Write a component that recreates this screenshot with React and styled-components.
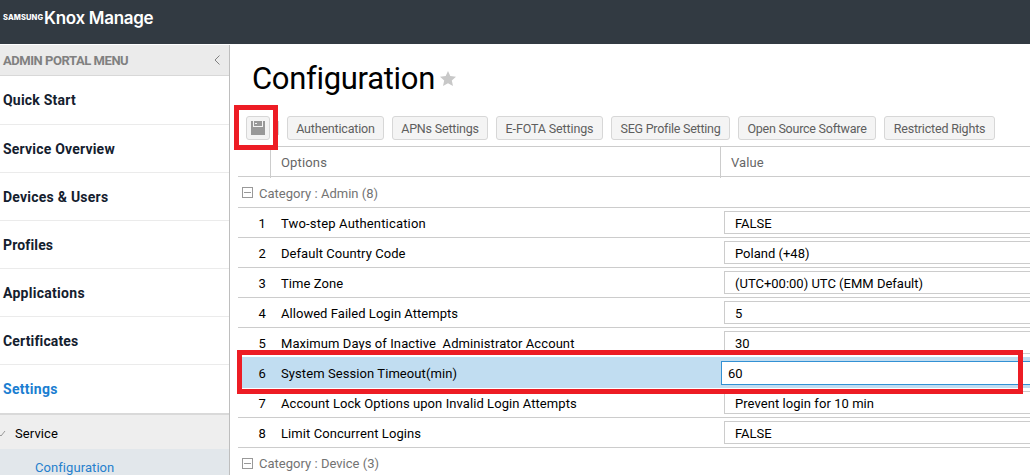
import React from "react";
import styled, { createGlobalStyle } from "styled-components";

const GlobalStyle = createGlobalStyle`
  * { box-sizing: border-box; }
  body { margin: 0; background: #fff; overflow: hidden; }
`;

const Page = styled.div`
  position: relative;
  width: 1030px;
  height: 475px;
  overflow: hidden;
  display: flex;
  flex-direction: column;
  font-family: Roboto, "Liberation Sans", sans-serif;
  font-size: 13px;
  color: #000;
  background: #fff;
`;

const TopBar = styled.header`
  flex: none;
  display: flex;
  align-items: flex-start;
  height: 45px;
  padding: 8px 0 0 3px;
  background: #323a42;
  border-bottom: 1px solid #fff;
  color: #fff;
  white-space: nowrap;
`;

const BrandSmall = styled.span`
  width: 41px;
  font: 800 7.5px/20px Inter, sans-serif;
  letter-spacing: 0.1px;
`;

const BrandName = styled.span`
  font: 600 17px/20px Inter, sans-serif;
  letter-spacing: -0.3px;
`;

const Body = styled.div`
  flex: 1;
  display: flex;
  min-height: 0;
`;

const Sidebar = styled.nav`
  flex: none;
  width: 230px;
  border-right: 1px solid #bebebe;
`;

const MenuHeader = styled.div`
  display: flex;
  align-items: center;
  justify-content: space-between;
  height: 31px;
  padding: 0 9px 0 3px;
  background: #ebebeb;
  border-bottom: 1px solid #d8d8d8;
  color: #808080;
  font-weight: 700;
`;

const Fit = styled.span`
  letter-spacing: ${(p) => p.$ls || 0}px;
  white-space: pre;
`;

const MenuItem = styled.div`
  display: flex;
  align-items: center;
  height: ${(p) => p.$h || 48}px;
  padding-left: 3px;
  border-bottom: 1px solid ${(p) => (p.$active ? "#fff" : "#ebebeb")};
  color: ${(p) => (p.$active ? "#1a7ed1" : "#14202e")};
  font-size: 14px;
  font-weight: 700;
`;

const SubItem = styled.div`
  display: flex;
  align-items: center;
  height: 36px;
  padding-top: 2px;
  gap: 9px;
  border-top: 2px solid #d9d9d9;
  background: #eee;
`;

const SubLink = styled.div`
  height: 30px;
  padding: 10px 0 0 35px;
  line-height: 17px;
  background: #e2e7eb;
  color: #2580cd;
`;

const Main = styled.main`
  flex: 1;
  min-width: 0;
  padding-left: 8px;
`;

const Title = styled.h1`
  display: flex;
  align-items: center;
  gap: 5px;
  height: 66px;
  margin: 0;
  padding-left: 14px;
  font-size: 31px;
  font-weight: 400;
`;

const Toolbar = styled.div`
  display: flex;
  height: 35px;
  padding: 5px 0 0 8px;
  gap: 8px;
`;

const Separator = styled.span`
  flex: none;
  width: 1px;
  height: 14px;
  margin-top: 5px;
  background: #d7d7d7;
`;

const Button = styled.button`
  flex: none;
  display: flex;
  align-items: center;
  justify-content: center;
  width: ${(p) => p.$w}px;
  height: 24px;
  padding: 1px 0 0;
  border: 1px solid #d7d7d7;
  border-radius: 3px;
  background: #f4f4f4;
  color: #5e5e5e;
  font: 400 12.5px/21px Roboto, sans-serif;
`;

const IconButton = styled(Button)`
  padding: 0;
`;

const Table = styled.div`
  border-top: 1px solid #ccc;
`;

const HeadRow = styled.div`
  display: grid;
  grid-template-columns: 32px 450px 1fr;
  height: 30px;
  border-bottom: 1px solid #ccc;
  color: #666;
  line-height: 31px;
`;

const HeadCell = styled.div`
  padding-left: 10px;
  border-left: ${(p) => (p.$first ? "0" : "1px solid #ccc")};
`;

const CategoryRow = styled.div`
  display: flex;
  align-items: center;
  gap: 6px;
  height: 31px;
  padding-left: 4px;
  border-bottom: 1px solid #ccc;
  color: #737373;

  span {
    padding-top: ${(p) => p.$drop || 0}px;
  }
`;

const Row = styled.div`
  display: grid;
  grid-template-columns: 43px 440px 1fr;
  height: 30px;
  line-height: 31px;
  border-bottom: 1px solid #ccc;
  ${(p) =>
    p.$selected &&
    `
    position: relative;
    height: 31px;
    margin-top: -1px;
    padding-top: 1px;
    background: #c1ddf1;
    border-bottom-color: #c1ddf1;
    box-shadow: 0 -1px #fff, 0 1px #fff;
  `}
`;

const Num = styled.div`
  padding-left: 20.5px;
`;

const Field = styled.div`
  height: ${(p) => (p.$focus ? 24 : 23)}px;
  margin: ${(p) => (p.$focus ? "3px 0 0 0" : "3px 0 0 3px")};
  padding-left: ${(p) => (p.$focus ? 6 : 10)}px;
  border: 1px solid ${(p) => (p.$focus ? "#3391d4" : "#ccc")};
  border-right: 0;
  background: #fff;
  line-height: 23px;
`;

const Highlight = styled.div`
  position: absolute;
  left: ${(p) => p.$x}px;
  top: ${(p) => p.$y}px;
  width: ${(p) => p.$w}px;
  height: ${(p) => p.$h}px;
  border: 5px solid #ed1c24;
`;

const MinusBox = () => (
  <svg width="11" height="11" viewBox="0 0 11 11" fill="none" stroke="#999" shapeRendering="crispEdges">
    <rect x="0.5" y="0.5" width="10" height="10" />
    <path d="M2 5.5h7" />
  </svg>
);

const menu = [
  ["Quick Start", 0.22, 49],
  ["Service Overview", 0.2],
  ["Devices & Users", 0.23],
  ["Profiles", 0.15],
  ["Applications", 0.28],
  ["Certificates", 0.15],
];

const buttons = [
  ["Authentication", 97, -0.18],
  ["APNs Settings", 96, -0.2],
  ["E-FOTA Settings", 107, -0.13],
  ["SEG Profile Setting", 119, -0.24],
  ["Open Source Software", 138, -0.24],
  ["Restricted Rights", 111, -0.18],
];

const rows = [
  ["Two-step Authentication", "FALSE", 0.17, 0],
  ["Default Country Code", "Poland (+48)", 0.06, 0],
  ["Time Zone", "(UTC+00:00) UTC (EMM Default)", 0.06, 0],
  ["Allowed Failed Login Attempts", "5", 0.04, 0],
  ["Maximum Days of Inactive  Administrator Account", "30", 0.08, 0],
  ["System Session Timeout(min)", "60", 0.08, 0],
  ["Account Lock Options upon Invalid Login Attempts", "Prevent login for 10 min", 0.07, 0.06],
  ["Limit Concurrent Logins", "FALSE", 0.08, 0],
];

export default function App() {
  return (
    <Page>
      <GlobalStyle />
      <TopBar>
        <BrandSmall>SAMSUNG</BrandSmall>
        <BrandName>Knox Manage</BrandName>
      </TopBar>
      <Body>
        <Sidebar>
          <MenuHeader>
            <Fit $ls={-0.45}>ADMIN PORTAL MENU</Fit>
            <svg width="6" height="10" viewBox="0 0 6 10" fill="none" stroke="#808080">
              <path d="M5.5 0.5L1 5l4.5 4.5" />
            </svg>
          </MenuHeader>
          {menu.map(([label, ls, h]) => (
            <MenuItem key={label} $h={h}>
              <Fit $ls={ls}>{label}</Fit>
            </MenuItem>
          ))}
          <MenuItem $active>
            <Fit $ls={0.28}>Settings</Fit>
          </MenuItem>
          <SubItem>
            <svg width="6" height="7" viewBox="0 0 6 7" fill="none" stroke="#999">
              <path d="M-1 4L1 6L5 1" />
            </svg>
            <Fit $ls={0.1}>Service</Fit>
          </SubItem>
          <SubLink>
            <Fit $ls={0.07}>Configuration</Fit>
          </SubLink>
        </Sidebar>
        <Main>
          <Title>
            <Fit $ls={-0.31}>Configuration</Fit>
            <svg width="16" height="15" viewBox="0 0 16 15" fill="#c8c8c8">
              <path d="M8 0l2.3 5.1 5.7.6-4.2 3.8 1.2 5.5-5-2.8L3 15l1.2-5.5L0 5.7l5.7-.6z" />
            </svg>
          </Title>
          <Toolbar>
            <IconButton $w={24}>
              <svg width="14" height="14" viewBox="0 0 14 14" shapeRendering="crispEdges">
                <path fill="#999" d="M0 0h14v14H0z" />
                <path fill="#f4f4f4" d="M2 0h1v5h8V0h1v6H2zM4 2h2v1H4z" />
              </svg>
            </IconButton>
            <Separator />
            {buttons.map(([label, w, ls]) => (
              <Button key={label} $w={w}>
                <Fit $ls={ls}>{label}</Fit>
              </Button>
            ))}
          </Toolbar>
          <Table>
            <HeadRow>
              <HeadCell $first />
              <HeadCell>
                <Fit $ls={0.15}>Options</Fit>
              </HeadCell>
              <HeadCell>
                <Fit $ls={0.1}>Value</Fit>
              </HeadCell>
            </HeadRow>
            <CategoryRow $drop={2}>
              <MinusBox />
              <Fit $ls={0.02}>Category : Admin (8)</Fit>
            </CategoryRow>
            {rows.map(([name, value, nameSpacing, valueSpacing], i) => (
              <Row key={name} $selected={i === 5}>
                <Num>{i + 1}</Num>
                <Fit $ls={nameSpacing}>{name}</Fit>
                <Field $focus={i === 5}>
                  <Fit $ls={valueSpacing}>{value}</Fit>
                </Field>
              </Row>
            ))}
            <CategoryRow>
              <MinusBox />
              <Fit $ls={0.02}>Category : Device (3)</Fit>
            </CategoryRow>
          </Table>
        </Main>
      </Body>
      <Highlight $x={234} $y={105} $w={44} $h={45} />
      <Highlight $x={237} $y={350} $w={786} $h={44} />
    </Page>
  );
}
